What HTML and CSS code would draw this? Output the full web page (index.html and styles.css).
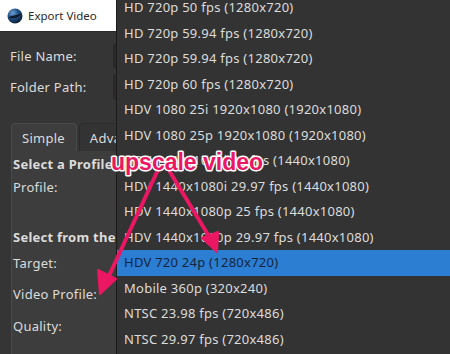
FILE: index.html
```html
<!DOCTYPE html>
<html lang="en">
<head>
    <meta charset="UTF-8">
    <title>Export Video</title>
    <link rel="stylesheet" href="styles.css">
</head>
<body>
    <div class="dialog">
        <div class="titlebar">
            <svg class="app-icon" width="16" height="16" viewBox="0 0 16 16">
                <defs>
                    <radialGradient id="ball" cx="0.35" cy="0.3" r="0.8">
                        <stop offset="0" stop-color="#6f9fd0"/>
                        <stop offset="0.45" stop-color="#1f4f86"/>
                        <stop offset="1" stop-color="#0b1622"/>
                    </radialGradient>
                </defs>
                <circle cx="8" cy="8" r="7.5" fill="url(#ball)"/>
                <path d="M1.5 9.5 C5 7, 10 7.5, 14.5 5.5 C12 9.5, 6 11.5, 1.5 9.5 Z" fill="#0a0f16" opacity="0.85"/>
            </svg>
            <span>Export Video</span>
        </div>

        <div class="fields">
            <div class="field-row">
                <span>File Name:</span>
                <div class="field-box"></div>
            </div>
            <div class="field-row">
                <span>Folder Path:</span>
                <div class="field-box"></div>
            </div>
        </div>

        <div class="tabs">
            <div class="tab active">Simple</div>
            <div class="tab">Advanced</div>
        </div>
        <div class="tab-panel">
            <div class="section">Select a Profile</div>
            <div class="label">Profile:</div>
            <div class="section gap">Select from the list</div>
            <div class="label">Target:</div>
            <div class="label">Video Profile:</div>
            <div class="label">Quality:</div>
        </div>
    </div>

    <div class="dropdown">
        <ul class="options">
            <li>HD 720p 50 fps (1280x720)</li>
            <li>HD 720p 59.94 fps (1280x720)</li>
            <li>HD 720p 59.94 fps (1280x720)</li>
            <li>HD 720p 60 fps (1280x720)</li>
            <li>HDV 1080 25i 1920x1080 (1920x1080)</li>
            <li>HDV 1080 25p 1920x1080 (1920x1080)</li>
            <li>HDV 1440x1080i 25 fps (1440x1080)</li>
            <li>HDV 1440x1080i 29.97 fps (1440x1080)</li>
            <li>HDV 1440x1080p 25 fps (1440x1080)</li>
            <li>HDV 1440x1080p 29.97 fps (1440x1080)</li>
            <li class="selected">HDV 720 24p (1280x720)</li>
            <li>Mobile 360p (320x240)</li>
            <li>NTSC 23.98 fps (720x486)</li>
            <li>NTSC 29.97 fps (720x486)</li>
        </ul>
    </div>

    <!-- annotation on top of the screenshot -->
    <svg class="note" width="450" height="354" viewBox="0 0 450 354">
        <g stroke="#ec1763" stroke-width="4" stroke-linecap="round" fill="#ec1763">
            <line x1="157" y1="172" x2="108" y2="278"/>
            <polygon points="100,294 98,270 116,279" stroke-width="2" stroke-linejoin="round"/>
            <line x1="170" y1="172" x2="210" y2="238"/>
            <polygon points="217,252 202,238 218,232" stroke-width="2" stroke-linejoin="round"/>
        </g>
        <text x="111" y="170" class="note-text">upscale video</text>
    </svg>
</body>
</html>
```

FILE: styles.css
```css
body {
    margin: 0;
    width: 450px;
    height: 354px;
    overflow: hidden;
    position: relative;
    display: flex;
    background-color: #353535;
    font-family: 'Noto Sans', 'Open Sans', sans-serif;
    font-size: 13px;
    letter-spacing: 0.25px;
    color: #dcdcdc;
}

.dialog {
    display: flex;
    flex-direction: column;
    flex: none;
    width: 116px;
    height: 100%;
    overflow: hidden;
}

.titlebar {
    display: flex;
    align-items: center;
    gap: 5px;
    height: 31px;
    padding-left: 7px;
    background: #fff;
    color: #2a2a2a;
    font-size: 11.5px;
    letter-spacing: 0;
    white-space: nowrap;
    border-bottom: 1px solid #2a2a2a;
}

.app-icon {
    flex: none;
}

.fields {
    display: flex;
    flex-direction: column;
    gap: 10px;
    padding: 13px 0 0 10px;
}

.field-row {
    display: flex;
    align-items: center;
    justify-content: space-between;
    height: 21px;
    white-space: nowrap;
}

.field-box {
    flex: none;
    width: 3px;
    height: 26px;
    background: #2a2a2a;
    border-radius: 3px 0 0 3px;
}

.tabs {
    display: flex;
    gap: 2px;
    margin: 26px 0 0 11px;
}

.tab {
    flex: none;
    padding: 5px 11px 4px 10px;
    line-height: 18px;
    border: 1px solid #2b2b2b;
    border-bottom: none;
    border-radius: 4px 4px 0 0;
    background: #333;
    white-space: nowrap;
}

.tab.active {
    background: #3d3d3d;
    border-color: #4a4a4a;
}

.tab-panel {
    flex: 1;
    margin-left: 11px;
    padding: 2px 0 0 1px;
    background: #3d3d3d;
    border-left: 1px solid #4a4a4a;
    overflow: hidden;
}

.section {
    font-weight: bold;
    height: 22px;
    line-height: 22px;
    white-space: nowrap;
}

.section.gap {
    height: 24.5px;
    margin-top: 19.5px;
}

.label {
    height: 31.5px;
    line-height: 24px;
    white-space: nowrap;
}

.dropdown {
    flex: 1;
    background: #333;
    border-left: 1px solid #1c1c1c;
    overflow: hidden;
}

.options {
    list-style: none;
    margin: -5px 0 0;
    padding: 0;
}

.options li {
    height: 25.5px;
    line-height: 25.5px;
    padding-left: 7px;
    white-space: nowrap;
}

.options li.selected {
    background: #2b7ed2;
    color: #16253a;
}

.note {
    position: absolute;
    top: 0;
    left: 0;
}

.note-text {
    font-family: 'Liberation Sans', Arial, sans-serif;
    font-size: 23px;
    font-weight: bold;
    letter-spacing: 0;
    fill: #ec1763;
    stroke: #fff;
    stroke-width: 3px;
    paint-order: stroke;
    stroke-linejoin: round;
}
```
